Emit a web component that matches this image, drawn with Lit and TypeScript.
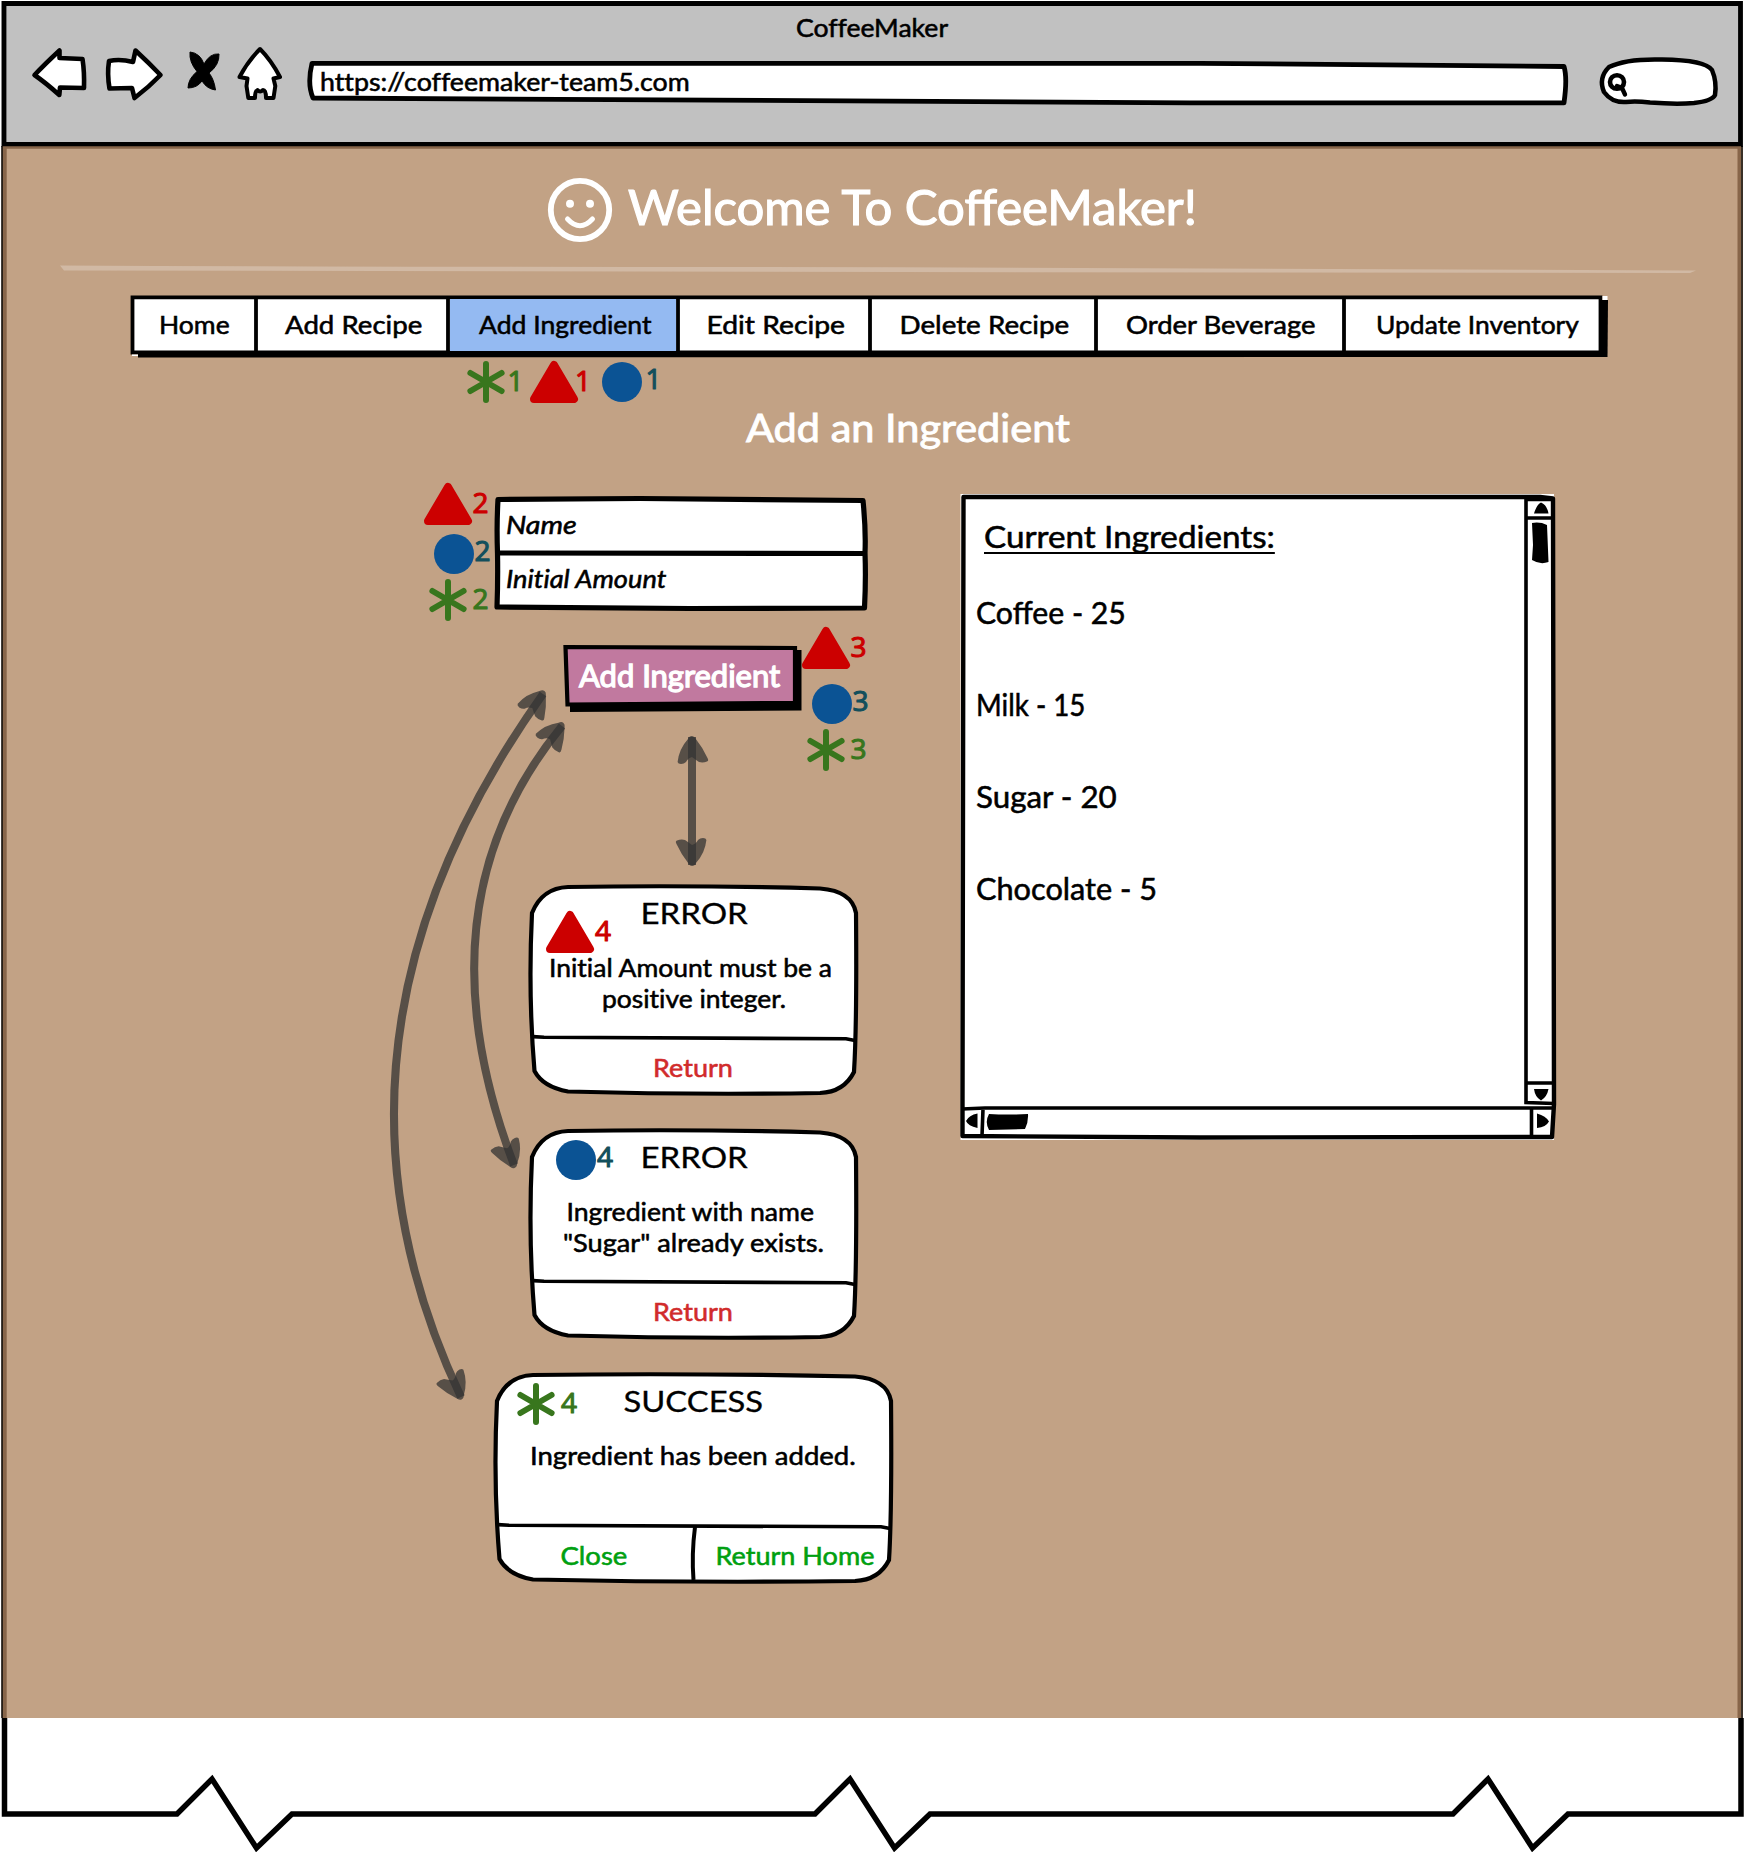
import { LitElement, html, css, svg } from "lit";
import { customElement, property } from "lit/decorators.js";

/** A single line of text, stretched so that it fills a given width. */
@customElement("sketch-label")
class SketchLabel extends LitElement {
  @property({ type: String }) text = "";
  @property({ type: Number }) span = 0;
  @property({ type: Number }) shift = 0;

  static styles = css`
    :host { display: block; flex: none; }
    .line {
      display: inline-block; white-space: pre; vertical-align: top; transform-origin: 0 50%;
      text-decoration: var(--label-decoration, none); text-decoration-thickness: 2px;
      text-underline-offset: 3.500px; text-decoration-skip-ink: none;
    }
  `;

  updated() {
    const line = this.renderRoot.querySelector(".line") as HTMLElement;
    const ratio = this.span / Math.max(1, line.offsetWidth);
    line.style.transform = `translateX(${this.shift}px) scaleX(${ratio.toFixed(4)})`;
    this.style.width = `${this.span}px`;
  }

  render() {
    return html`<span class="line">${this.text}</span>`;
  }
}

type Line = { text: string; span: number; shift?: number };
const label = (l: Line) =>
  html`<sketch-label .text=${l.text} .span=${l.span} .shift=${l.shift ?? 0}></sketch-label>`;

const NAV: (Line & { active?: boolean })[] = [
  { text: "Home", span: 71, shift: 1 },
  { text: "Add Recipe", span: 137, shift: 1 },
  { text: "Add Ingredient", span: 173, shift: 2, active: true },
  { text: "Edit Recipe", span: 138, shift: 1.5 },
  { text: "Delete Recipe", span: 170, shift: 1.5 },
  { text: "Order Beverage", span: 190, shift: 1 },
  { text: "Update Inventory", span: 203, shift: 5 },
];

const STOCK: Line[] = [
  { text: "Coffee - 25", span: 150 },
  { text: "Milk - 15", span: 109, shift: 0 },
  { text: "Sugar - 20", span: 141 },
  { text: "Chocolate - 5", span: 181 },
];

const RED = "#cc0000";
const BLUE = "#0b5394";
const TEAL = "#134f5c";
const GREEN = "#38761d";

const triangle = (cx: number, top: number) => svg`
  <path d="M${cx} ${top + 4} L${cx + 20} ${top + 38} H${cx - 20} Z" fill=${RED} stroke=${RED} stroke-width="8" stroke-linejoin="round"/>`;
const circle = (cx: number, cy: number) => svg`<circle cx=${cx} cy=${cy} r="20" fill=${BLUE}/>`;
const asterisk = (cx: number, cy: number) => svg`
  <path d="M${cx} ${cy - 18} V${cy + 18} M${cx - 15.6} ${cy - 9} L${cx + 15.6} ${cy + 9} M${cx + 15.6} ${cy - 9} L${cx - 15.6} ${cy + 9}"
    fill="none" stroke=${GREEN} stroke-width="6" stroke-linecap="round"/>`;
const digit = (x: number, base: number, n: string, color: string) => svg`
  <text class="digit" x=${x} y=${base} fill=${color} stroke=${color} stroke-width="1.1" stroke-linejoin="round" text-anchor="middle">${n}</text>`;
const head = (x: number, y: number, angle: number) => svg`
  <path transform="translate(${x} ${y}) rotate(${angle})" fill="#333" fill-opacity="0.75"
    d="M0 0 C-2 0 -3 1 -4 3 Q-13 13 -14.4 26 Q-14 28 -11 28 Q-8 28 -6 26 Q-4 22 0 21 Q4 24 7 26 Q11 27 15 25.500 Q17 25 15.500 22 Q11 12 3.500 2.500 Q2 0 0 0 Z"/>`;

const dialogFrame = (w: number, split: boolean) => {
  const r = w - 4;
  return html`<svg class="frame" width=${w} height="212" viewBox="0 0 ${w} 212">
    <path d="M40 3 Q${w / 2} 1 ${w - 40} 4.500 Q${r - 4} 7 ${r} 29 Q${r + 1} 140 ${r - 2} 188 Q${r - 12} 208 ${w - 40} 209 Q${w / 2} 211 40 207.500 Q15 203 6.500 187 Q0 110 4 29 Q14 4 40 3 Z"
      fill="#fff" stroke="#000" stroke-width="4.200"/>
    <path d="M5 152.600 L16 153.300 L${w - 14} 154.800 L${r - 1} 156.600" fill="none" stroke="#000" stroke-width="3.600"/>
    ${split ? svg`<path d="M202 155 Q198.500 182 200.500 208" fill="none" stroke="#000" stroke-width="4"/>` : ""}
  </svg>`;
};

@customElement("app-root")
class AppRoot extends LitElement {
  static styles = css`
    :host { display: block; }
    * { box-sizing: border-box; }
    svg { display: block; flex: none; }
    .window {
      position: relative; width: 1744px; height: 1852px; overflow: hidden; background: #fff; color: #000;
      font-family: Lato, "Open Sans", sans-serif; font-size: 25px; line-height: 30px;
      font-variant-ligatures: none; -webkit-text-stroke: 0.55px currentColor;
    }
    .overlay { position: absolute; left: 0; top: 0; pointer-events: none; }
    .digit { font-family: "Open Sans", sans-serif; font-size: 28px; }

    .chrome { height: 146px; background: #c1c1c1; padding-top: 12px; }
    .chrome-title { display: flex; justify-content: center; height: 32px; }
    .toolbar { display: flex; gap: 12px; padding-left: 28px; height: 64px; }
    .url { position: relative; width: 1274px; height: 64px; padding-left: 24px; line-height: 74px; }
    .frame { position: absolute; left: 0; top: 0; overflow: visible; }
    .url sketch-label, .button sketch-label { position: relative; }

    .page { height: 1572px; background: #c2a285; }
    .welcome {
      display: flex; align-items: center; gap: 15px; height: 118px; padding: 10px 0 0 547px;
      color: #fff; font-size: 48px; line-height: 60px; -webkit-text-stroke-width: 1.2px;
      font-variant-ligatures: normal;
    }
    .welcome sketch-label { margin-bottom: 6px; }
    .nav {
      position: relative; display: grid; grid-template-columns: 126px 192px 230px 192px 226px 248px 266px;
      width: 1480px; height: 63px; margin: 19px 0 0 130px;
    }
    .tab { position: relative; display: flex; justify-content: center; align-items: center; padding-bottom: 5px; }
    .tab:last-child { padding-right: 9px; }
    .heading {
      height: 50px; margin-top: 44px; padding-left: 746px; color: #fff;
      font-size: 38px; line-height: 50px; -webkit-text-stroke-width: 0.9px;
    }
    .body { display: flex; margin-top: 42px; }
    .left { width: 960px; display: flex; flex-direction: column; align-items: flex-start; }
    .form { position: relative; width: 377px; height: 118px; margin-left: 493px; padding-top: 3px; font-style: italic; }
    .field { position: relative; height: 54px; line-height: 54px; padding: 0 0 0 13px; }
    .button {
      position: relative; width: 242px; height: 70px; margin: 31px 0 0 562px; padding-left: 17px;
      color: #fff; font-size: 30px; line-height: 65px; -webkit-text-stroke-width: 1.3px;
    }
    .dialogs { display: flex; flex-direction: column; align-items: center; gap: 32px; width: 404px; margin: 171px 0 0 492px; }
    .dialog { position: relative; width: 332px; height: 212px; padding-top: 13px; }
    .dialog.wide { width: 402px; }
    .dialog-title {
      position: relative; display: flex; justify-content: center; height: 31px;
      font-size: 29px; line-height: 31px; -webkit-text-stroke-width: 0.3px;
    }
    .message {
      position: relative; display: flex; flex-direction: column; align-items: center;
      height: 86px; margin-top: 24px; line-height: 31px;
    }
    .actions { position: relative; display: flex; height: 58px; line-height: 58px; }
    .action { flex: 1; display: flex; justify-content: center; color: #d12b2b; }
    .wide .action { color: #00a010; }

    .panel { position: relative; width: 596px; height: 646px; padding: 22px 0 0 16px; font-size: 30px; }
    .panel-title { position: relative; height: 40px; line-height: 40px; padding-left: 8px; --label-decoration: underline; }
    .stock { position: relative; margin-top: 10px; line-height: 92px; font-variant-ligatures: normal; }
  `;

  private toolbar() {
    return html`
      <div class="toolbar">
        <svg width="62" height="64" viewBox="28 44 62 64">
          <path d="M34.500 75 Q45 64 59.500 50.500 L59.500 58 L82.500 59 Q84.500 72 84 88 L60 87.500 L59.300 95 Q46 83 34.500 75 Z" fill="#fff" stroke="#000" stroke-width="4.600" stroke-linejoin="round"/>
        </svg>
        <svg width="64" height="64" viewBox="102 44 64 64">
          <path d="M109 61 Q120 58.500 133 62 L135.500 50.500 Q149 63 160.500 75 Q149 87 134.500 98 L132 88 L109.500 88.500 Q107 74 109 61 Z" fill="#fff" stroke="#000" stroke-width="4.600" stroke-linejoin="round"/>
        </svg>
        <svg width="46" height="64" viewBox="178 44 46 64">
          <path d="M190 52 Q200 53 204 64 Q210 53 219 54 Q219.500 65 209 73 Q214 79 215.500 90 Q207 89 202 81 Q197 88 188 88 Q188 79 197 71.500 Q189 62 190 52 Z" fill="#000" stroke="#000" stroke-width="1"/>
        </svg>
        <svg width="48" height="64" viewBox="236 44 48 64">
          <path d="M260 49 Q271 60 280 77 L273.500 78.500 L275.300 86 L273.500 98 L266 98 Q266 90 263 90 Q260 93 257.500 90 Q255 91 255 98 L248.300 98 L246.500 86 L247.500 78.500 L239.500 77 Q248 61 260 49 Z" fill="#fff" stroke="#000" stroke-width="4" stroke-linejoin="round"/>
        </svg>
        <div class="url">
          <svg class="frame" width="1274" height="64" viewBox="296 44 1274 64">
            <path d="M312 63.300 H1200 L1564 66.500 Q1567.500 78 1564 102.800 H1190 L313 98 Q307 84 312 63.300 Z" fill="#fff" stroke="#000" stroke-width="4.800" stroke-linejoin="round"/>
          </svg>
          ${label({ text: "https://coffeemaker-team5.com", span: 370, shift: 0 })}
        </div>
        <svg width="142" height="64" viewBox="1582 44 142 64">
          <path d="M1626 102 Q1612 103 1604 92 Q1598 78 1609 67 Q1626 58.500 1662 59.500 Q1705 60 1712 70 Q1717 82 1715 95 Q1712 101 1694 103 Q1676 104.500 1650 102.500 Q1636 101 1626 102 Z" fill="#fff" stroke="#000" stroke-width="4.500"/>
          <ellipse cx="1617" cy="82" rx="7" ry="6.800" fill="#fff" stroke="#000" stroke-width="4.600"/>
          <path d="M1617 86 L1622 88 L1625 94.500" fill="none" stroke="#000" stroke-width="4.400" stroke-linecap="round"/>
        </svg>
      </div>`;
  }

  private nav() {
    return html`
      <div class="nav">
        <svg class="frame" width="1480" height="63" viewBox="130 295 1480 63">
          <path d="M138 300 H1608 L1607.500 357 L138 357.500 Z" fill="#000"/>
          <path d="M132.500 297.300 H1600.500 V352.500 H132.500 Z" fill="#fff" stroke="#000" stroke-width="3.800"/>
          <rect x="450" y="299" width="226" height="52" fill="#94baf2"/>
          <path d="M256 297 V354 M448 297 V354 M678 297 V354 M870 297 V354 M1096 297 V354 M1344 297 V354" stroke="#000" stroke-width="3.800"/>
          <path d="M1602.500 296 H1607.500 V300 H1602.500 Z M132 354.500 H138 V356 H132 Z" fill="#fff"/>
        </svg>
        ${NAV.map((item) => html`<div class="tab">${label(item)}</div>`)}
      </div>`;
  }

  private dialog(title: Line, message: Line[], actions: Line[]) {
    const wide = actions.length > 1;
    return html`
      <div class="dialog ${wide ? "wide" : ""}">
        ${dialogFrame(wide ? 402 : 332, wide)}
        <div class="dialog-title">${label(title)}</div>
        <div class="message">${message.map(label)}</div>
        <div class="actions">${actions.map((a) => html`<div class="action">${label(a)}</div>`)}</div>
      </div>`;
  }

  private panel() {
    return html`
      <div class="panel">
        <svg class="frame" width="596" height="646" viewBox="960 494 596 646">
          <rect x="960.500" y="494" width="593.500" height="646" fill="#fff"/>
          <path d="M963.500 497 H1540 L1553 498.500 L1554 1104 L1552 1137 L1200 1137.500 L962.500 1136 L962.500 1106 L963.500 497 Z" fill="none" stroke="#000" stroke-width="4.400" stroke-linejoin="round"/>
          <path d="M1526 499 V1102.500 L1554 1103.500 M1526 499.500 H1552 M1527 518 H1553 M1527 1083 H1553 M962 1109 L985 1108 H1552 M983 1109 L982 1136 M1531.500 1109 V1136" fill="none" stroke="#000" stroke-width="3.600"/>
          <path d="M1534 513.500 Q1537 504 1541 502.500 Q1547 505 1548.500 513.500 Z M1534 1089 H1548.500 Q1547 1097 1541 1100.500 Q1535 1097 1534 1089 Z M977.500 1113.500 V1128 Q968 1126 966 1121 Q969 1115 977.500 1113.500 Z M1537 1113.500 Q1546 1116 1549 1121.500 Q1546 1127 1537 1128 Z" fill="#000"/>
          <path d="M1532 523 Q1540 521.500 1547 525 L1548.500 562 Q1540 565 1532 560 L1533 545 Z M989 1114 Q1008 1115 1028 1114 Q1028.500 1122 1025 1129 L989 1130 Q984.500 1122 989 1114 Z" fill="#000"/>
        </svg>
        <div class="panel-title">${label({ text: "Current Ingredients:", span: 291 })}</div>
        <div class="stock">${STOCK.map(label)}</div>
      </div>`;
  }

  private annotations() {
    return html`
      <svg class="overlay" width="1744" height="1852" viewBox="0 0 1744 1852">
        <g fill="none" stroke="#333" stroke-opacity="0.75" stroke-width="8">
          <path d="M692 737 V865"/>
          <path d="M543 694 Q294 1044 461 1397"/>
          <path d="M562 726 Q415 905 514 1165"/>
        </g>
        ${head(692, 736, 0)} ${head(692, 866, 180)}
        ${head(544.5, 691, 35.5)} ${head(461.5, 1399.5, 154.7)}
        ${head(563.5, 723, 39.6)} ${head(514.5, 1168, 159.2)}

        ${asterisk(486, 382)} ${digit(515.5, 391, "1", GREEN)}
        ${triangle(554, 361)} ${digit(583, 391, "1", RED)}
        ${circle(622, 382)} ${digit(653.5, 389, "1", TEAL)}

        ${triangle(448, 483)} ${digit(480.5, 513, "2", RED)}
        ${circle(454, 554)} ${digit(482.5, 561, "2", TEAL)}
        ${asterisk(448, 600)} ${digit(480.5, 609, "2", GREEN)}

        ${triangle(826, 627)} ${digit(858.5, 657, "3", RED)}
        ${circle(832, 704)} ${digit(860.5, 711, "3", TEAL)}
        ${asterisk(826, 750)} ${digit(858.5, 759, "3", GREEN)}

        ${triangle(570, 911)} ${digit(603, 941, "4", RED)}
        ${circle(576, 1160)} ${digit(605, 1167, "4", TEAL)}
        ${asterisk(536, 1404)} ${digit(569, 1413, "4", GREEN)}
      </svg>`;
  }

  private windowFrame() {
    return html`
      <svg class="overlay" width="1744" height="1852" viewBox="0 0 1744 1852">
        <path d="M0 0 H1744 V146 H1743 V1 H1.500 V146 H0 Z" fill="#fff"/>
        <path d="M0 146 H1.500 V1718 H0 Z M1743 146 H1744 V1718 H1743 Z" fill="#fff"/>
        <path d="M4 144.500 V3.500 H1740.500 V144.500 Z" fill="none" stroke="#000" stroke-width="4.800"/>
        <path d="M4 144.500 H1740" stroke="#000" stroke-width="3.500"/>
        <path d="M2 146.200 H1741 V148.800 H6.700 V1718 H2 Z M1737.500 148 H1741 V1718 H1737.500 Z" fill="#876549"/>
        <path d="M2 146 V1718 M1742 146 V1718" stroke="#000" stroke-width="1.400"/>
        <path d="M4.500 1718 V1814 H177 L212 1779 L256.500 1848 L292 1814 H815 L850 1779 L894.500 1848 L930 1814 H1453 L1488 1779 L1532.500 1848 L1568 1814 H1741 V1718" fill="none" stroke="#000" stroke-width="5.500"/>
      </svg>`;
  }

  render() {
    return html`
      <div class="window">
        <div class="chrome">
          <div class="chrome-title">${label({ text: "CoffeeMaker", span: 152 })}</div>
          ${this.toolbar()}
        </div>
        <div class="page">
          <div class="welcome">
            <svg width="66" height="66" viewBox="547 177 66 66">
              <circle cx="580" cy="210" r="29.200" fill="none" stroke="#fff" stroke-width="5.800"/>
              <ellipse cx="570" cy="203.700" rx="4" ry="4" fill="#fff"/>
              <ellipse cx="590" cy="203.700" rx="4" ry="4" fill="#fff"/>
              <path d="M567.500 219 Q580 232.500 592.500 219" fill="none" stroke="#fff" stroke-width="5" stroke-linecap="round"/>
            </svg>
            ${label({ text: "Welcome To CoffeeMaker!", span: 569 })}
          </div>
          <svg width="1744" height="12" viewBox="0 264 1744 12">
            <path d="M60 265.500 Q400 267 900 267.200 L1696 270.500 L1690 273 L900 272 L64 270.500 Z" fill="#d1b9a4"/>
          </svg>
          ${this.nav()}
          <div class="heading">${label({ text: "Add an Ingredient", span: 324 })}</div>
          <div class="body">
            <div class="left">
              <div class="form">
                <svg class="frame" width="377" height="118" viewBox="493 494 377 118">
                  <path d="M498 499.500 L640 498.500 L863 500.500 Q866 530 865 553 Q866 580 864.500 608 L690 608.500 L497 607 Q498 580 497.500 553 Q496.500 525 498 499.500 Z" fill="#fff" stroke="#000" stroke-width="5.200" stroke-linejoin="round"/>
                  <path d="M497 553 L865 553.500" stroke="#000" stroke-width="5.200"/>
                </svg>
                <div class="field">${label({ text: "Name", span: 71 })}</div>
                <div class="field">${label({ text: "Initial Amount", span: 160 })}</div>
              </div>
              <div class="button">
                <svg class="frame" width="242" height="70" viewBox="562 643 242 70">
                  <path d="M570 650 H801.500 V710.500 L570 712 Z" fill="#000"/>
                  <path d="M565.500 647 L795 648 V703 L567.500 704.500 Z" fill="#c1799f" stroke="#000" stroke-width="4.200"/>
                </svg>
                ${label({ text: "Add Ingredient", span: 201 })}
              </div>
              <div class="dialogs">
                ${this.dialog(
                  { text: "ERROR", span: 107, shift: -0.5 },
                  [{ text: "Initial Amount must be a", span: 283, shift: -4 }, { text: "positive integer.", span: 184 }],
                  [{ text: "Return", span: 80, shift: -1 }],
                )}
                ${this.dialog(
                  { text: "ERROR", span: 107, shift: -0.5 },
                  [{ text: "Ingredient with name", span: 247, shift: -4.5 }, { text: "\"Sugar\" already exists.", span: 261, shift: -1 }],
                  [{ text: "Return", span: 80, shift: -1 }],
                )}
                ${this.dialog(
                  { text: "SUCCESS", span: 140, shift: -0.5 },
                  [{ text: "Ingredient has been added.", span: 326, shift: -1 }],
                  [{ text: "Close", span: 67, shift: 0.5 }, { text: "Return Home", span: 159, shift: 0.5 }],
                )}
              </div>
            </div>
            ${this.panel()}
          </div>
        </div>
        ${this.annotations()} ${this.windowFrame()}
      </div>`;
  }
}
